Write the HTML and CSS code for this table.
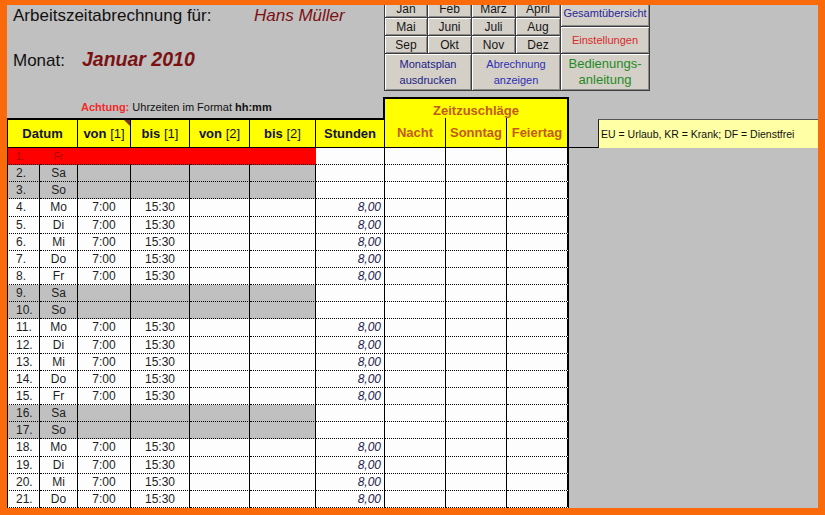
FILE: index.html
```html
<!DOCTYPE html>
<html lang="de">
<head>
<meta charset="utf-8">
<title>Arbeitszeitabrechnung</title>
<link rel="stylesheet" href="styles.css">
</head>
<body>
<div class="frame">
  <div class="top">
    <div class="title">
      <div class="line1"><span class="lbl1">Arbeitszeitabrechnung für:</span><span class="name">Hans Müller</span></div>
      <div class="line2"><span class="lbl2">Monat:</span><span class="month">Januar 2010</span></div>
    </div>
    <div class="buttons">
      <div class="btn-upper">
        <div class="months">
          <div class="btn">Jan</div><div class="btn">Feb</div><div class="btn">März</div><div class="btn">April</div>
          <div class="btn">Mai</div><div class="btn">Juni</div><div class="btn">Juli</div><div class="btn">Aug</div>
          <div class="btn">Sep</div><div class="btn">Okt</div><div class="btn">Nov</div><div class="btn">Dez</div>
        </div>
        <div class="side">
          <div class="btn b-gesamt">Gesamtübersicht</div>
          <div class="btn b-einst">Einstellungen</div>
        </div>
      </div>
      <div class="btn-lower">
        <div class="btn b-plan">Monatsplan<br>ausdrucken</div>
        <div class="btn b-abr">Abrechnung<br>anzeigen</div>
        <div class="btn b-hilfe">Bedienungs-<br>anleitung</div>
      </div>
    </div>
  </div>

  <div class="sheet">
    <div class="row z">
      <div class="zpad"></div>
      <div class="note"><b class="warn">Achtung:</b> Uhrzeiten im Format <b>hh:mm</b></div>
      <div class="zz">Zeitzuschläge</div>
    </div>

    <div class="row head">
      <div class="c h first datum"><span>Datum</span></div>
      <div class="c h mark"><span><b>von</b> [1]</span></div>
      <div class="c h"><span><b>bis</b> [1]</span></div>
      <div class="c h"><span><b>von</b> [2]</span></div>
      <div class="c h"><span><b>bis</b> [2]</span></div>
      <div class="c h"><span><b>Stunden</b></span></div>
      <div class="c h zh"><span>Nacht</span></div>
      <div class="c h zh"><span>Sonntag</span></div>
      <div class="c h zh last"><span>Feiertag</span></div>
      <div class="hline"></div>
      <div class="eu">EU = Urlaub, KR = Krank; DF = Dienstfrei</div>
    </div>

    <div class="row red"><div class="c first n">1.</div><div class="c d">Fr</div><div class="c t"></div><div class="c t"></div><div class="c"></div><div class="c"></div><div class="c s"></div><div class="c"></div><div class="c"></div><div class="c last"></div></div>
    <div class="row we"><div class="c first n">2.</div><div class="c d">Sa</div><div class="c t"></div><div class="c t"></div><div class="c"></div><div class="c"></div><div class="c s"></div><div class="c"></div><div class="c"></div><div class="c last"></div></div>
    <div class="row we"><div class="c first n">3.</div><div class="c d">So</div><div class="c t"></div><div class="c t"></div><div class="c"></div><div class="c"></div><div class="c s"></div><div class="c"></div><div class="c"></div><div class="c last"></div></div>
    <div class="row"><div class="c first n">4.</div><div class="c d">Mo</div><div class="c t">7:00</div><div class="c t">15:30</div><div class="c"></div><div class="c"></div><div class="c s">8,00</div><div class="c"></div><div class="c"></div><div class="c last"></div></div>
    <div class="row"><div class="c first n">5.</div><div class="c d">Di</div><div class="c t">7:00</div><div class="c t">15:30</div><div class="c"></div><div class="c"></div><div class="c s">8,00</div><div class="c"></div><div class="c"></div><div class="c last"></div></div>
    <div class="row"><div class="c first n">6.</div><div class="c d">Mi</div><div class="c t">7:00</div><div class="c t">15:30</div><div class="c"></div><div class="c"></div><div class="c s">8,00</div><div class="c"></div><div class="c"></div><div class="c last"></div></div>
    <div class="row"><div class="c first n">7.</div><div class="c d">Do</div><div class="c t">7:00</div><div class="c t">15:30</div><div class="c"></div><div class="c"></div><div class="c s">8,00</div><div class="c"></div><div class="c"></div><div class="c last"></div></div>
    <div class="row"><div class="c first n">8.</div><div class="c d">Fr</div><div class="c t">7:00</div><div class="c t">15:30</div><div class="c"></div><div class="c"></div><div class="c s">8,00</div><div class="c"></div><div class="c"></div><div class="c last"></div></div>
    <div class="row we"><div class="c first n">9.</div><div class="c d">Sa</div><div class="c t"></div><div class="c t"></div><div class="c"></div><div class="c"></div><div class="c s"></div><div class="c"></div><div class="c"></div><div class="c last"></div></div>
    <div class="row we"><div class="c first n">10.</div><div class="c d">So</div><div class="c t"></div><div class="c t"></div><div class="c"></div><div class="c"></div><div class="c s"></div><div class="c"></div><div class="c"></div><div class="c last"></div></div>
    <div class="row"><div class="c first n">11.</div><div class="c d">Mo</div><div class="c t">7:00</div><div class="c t">15:30</div><div class="c"></div><div class="c"></div><div class="c s">8,00</div><div class="c"></div><div class="c"></div><div class="c last"></div></div>
    <div class="row"><div class="c first n">12.</div><div class="c d">Di</div><div class="c t">7:00</div><div class="c t">15:30</div><div class="c"></div><div class="c"></div><div class="c s">8,00</div><div class="c"></div><div class="c"></div><div class="c last"></div></div>
    <div class="row"><div class="c first n">13.</div><div class="c d">Mi</div><div class="c t">7:00</div><div class="c t">15:30</div><div class="c"></div><div class="c"></div><div class="c s">8,00</div><div class="c"></div><div class="c"></div><div class="c last"></div></div>
    <div class="row"><div class="c first n">14.</div><div class="c d">Do</div><div class="c t">7:00</div><div class="c t">15:30</div><div class="c"></div><div class="c"></div><div class="c s">8,00</div><div class="c"></div><div class="c"></div><div class="c last"></div></div>
    <div class="row"><div class="c first n">15.</div><div class="c d">Fr</div><div class="c t">7:00</div><div class="c t">15:30</div><div class="c"></div><div class="c"></div><div class="c s">8,00</div><div class="c"></div><div class="c"></div><div class="c last"></div></div>
    <div class="row we"><div class="c first n">16.</div><div class="c d">Sa</div><div class="c t"></div><div class="c t"></div><div class="c"></div><div class="c"></div><div class="c s"></div><div class="c"></div><div class="c"></div><div class="c last"></div></div>
    <div class="row we"><div class="c first n">17.</div><div class="c d">So</div><div class="c t"></div><div class="c t"></div><div class="c"></div><div class="c"></div><div class="c s"></div><div class="c"></div><div class="c"></div><div class="c last"></div></div>
    <div class="row"><div class="c first n">18.</div><div class="c d">Mo</div><div class="c t">7:00</div><div class="c t">15:30</div><div class="c"></div><div class="c"></div><div class="c s">8,00</div><div class="c"></div><div class="c"></div><div class="c last"></div></div>
    <div class="row"><div class="c first n">19.</div><div class="c d">Di</div><div class="c t">7:00</div><div class="c t">15:30</div><div class="c"></div><div class="c"></div><div class="c s">8,00</div><div class="c"></div><div class="c"></div><div class="c last"></div></div>
    <div class="row"><div class="c first n">20.</div><div class="c d">Mi</div><div class="c t">7:00</div><div class="c t">15:30</div><div class="c"></div><div class="c"></div><div class="c s">8,00</div><div class="c"></div><div class="c"></div><div class="c last"></div></div>
    <div class="row"><div class="c first n">21.</div><div class="c d">Do</div><div class="c t">7:00</div><div class="c t">15:30</div><div class="c"></div><div class="c"></div><div class="c s">8,00</div><div class="c"></div><div class="c"></div><div class="c last"></div></div>
  </div>
</div>
</body>
</html>
```

FILE: styles.css
```css
* { box-sizing: border-box; }

html, body {
  margin: 0;
  padding: 0;
  background: #fa6a0a;
}

body {
  font-family: "Liberation Sans", Arial, sans-serif;
  color: #1a1a1a;
}

.frame {
  position: relative;
  width: 825px;
  height: 515px;
  background: #c0c0c0;
  overflow: hidden;
}

.frame::after {
  content: "";
  position: absolute;
  inset: 0;
  border-style: solid;
  border-color: #fa6a0a;
  border-width: 5px 7px 7px 7px;
  pointer-events: none;
}

/* ---------- top area ---------- */
.top {
  display: flex;
  height: 97px;
}

.title {
  width: 384px;
  flex: none;
  padding: 6px 0 0 13px;
}

.line1 {
  display: flex;
  align-items: baseline;
  font-size: 17px;
  line-height: 20px;
}

.lbl1 { width: 241px; flex: none; color: #111; }

.name {
  font-style: italic;
  color: #7b1113;
}

.line2 {
  display: flex;
  align-items: baseline;
  margin-top: 21px;
  line-height: 24px;
}

.lbl2 {
  width: 69px;
  flex: none;
  font-size: 17px;
  color: #111;
}

.month {
  font-size: 19.5px;
  font-weight: bold;
  font-style: italic;
  color: #7b1113;
}

/* ---------- buttons ---------- */
.buttons {
  width: 266px;
  height: 91px;
  flex: none;
  background: #3c3c3c;
  padding: 0 1px 1px 1px;
  display: flex;
  flex-direction: column;
  gap: 1px;
}

.btn-upper {
  display: flex;
  gap: 1px;
  height: 53px;
}

.months {
  display: grid;
  grid-template-columns: 42px 43px 43px 44px;
  grid-auto-rows: 17px;
  gap: 1px;
}

.side {
  width: 88px;
  display: flex;
  flex-direction: column;
  gap: 1px;
}

.side .btn { height: 26px; }

.btn-lower {
  display: flex;
  gap: 1px;
  height: 36px;
}

.btn-lower .btn:first-child { width: 86px; }
.btn-lower .btn { width: 88px; line-height: 16px; }

.btn {
  background: #d4d0c8;
  box-shadow: inset 1px 1px 0 #ffffff, inset -1px -1px 0 #8a8a8a;
  display: flex;
  align-items: center;
  justify-content: center;
  text-align: center;
  font-size: 12px;
  color: #161616;
}

.b-gesamt { font-size: 11px; color: #26269a; }
.b-einst { font-size: 11px; color: #d62a2a; }
.b-plan { font-size: 11px; color: #1c1c86; }
.b-abr { font-size: 11px; color: #2f2fb4; }
.b-hilfe { font-size: 13px; color: #1f8a1f; }

/* ---------- sheet ---------- */
.sheet {
  padding-left: 7px;
}

.row {
  display: grid;
  grid-template-columns: 33px 38px 53px 59px 60px 66px 69px 61px 61px 62px 29px 1fr;
  height: 17.15px;
}

.row.z { height: 21px; }
.row.head { height: 30px; }

.zpad { grid-column: 1 / 3; }

.note {
  grid-column: 3 / 8;
  border-right: 2px solid #000;
  font-size: 11px;
  line-height: 13px;
  padding: 4px 0 0 3px;
  color: #111;
  white-space: nowrap;
}

.warn { color: #f02a2a; }

.zz {
  grid-column: 8 / 11;
  background: #ffff00;
  border-top: 2px solid #000;
  border-right: 2px solid #000;
  padding-top: 3px;
  display: flex;
  align-items: center;
  justify-content: center;
  font-size: 13px;
  font-weight: bold;
  color: #c25a18;
}

.c {
  border-right: 1px solid #000;
  border-bottom: 1px dotted #000;
  background: #fdfdfd;
  display: flex;
  align-items: center;
  font-size: 12px;
  color: #1e1e1e;
  white-space: nowrap;
}

.c.first { border-left: 1px solid #000; }
.c.last { border-right: 2px solid #000; }

.n { padding-left: 8px; }
.d, .t { justify-content: center; }

.s {
  justify-content: flex-end;
  padding-right: 3px;
  font-style: italic;
  color: #1e1e50;
}

/* header */
.h {
  background: #ffff00;
  border-top: 2px solid #000;
  border-bottom: 1px solid #000;
  border-bottom-style: solid;
  justify-content: center;
  font-size: 13px;
  color: #14143a;
}

.datum {
  grid-column: 1 / 3;
  font-weight: bold;
}

.h.mark { position: relative; }
.h.mark::after {
  content: "";
  position: absolute;
  top: 0;
  right: 0;
  border-style: solid;
  border-width: 0 6px 6px 0;
  border-color: transparent #7a3a14 transparent transparent;
}

.h.zh {
  border-top: none;
  font-weight: bold;
  color: #c25a18;
}

.hline {
  border-bottom: 1px solid #000;
}

.eu {
  background: #ffffa6;
  border-left: 1px solid #222;
  border-top: 1px solid #555;
  margin-top: 1px;
  display: flex;
  align-items: center;
  padding-left: 2px;
  font-size: 10.5px;
  color: #111;
  white-space: nowrap;
}

/* weekend & highlighted rows */
.row.we > .c:nth-child(-n+6) { background: #c0c0c0; }

.row.red > .c:nth-child(-n+6) {
  background: #ff0000;
  border-right-color: #ff0000;
  color: #a80000;
  font-size: 10px;
}
```
